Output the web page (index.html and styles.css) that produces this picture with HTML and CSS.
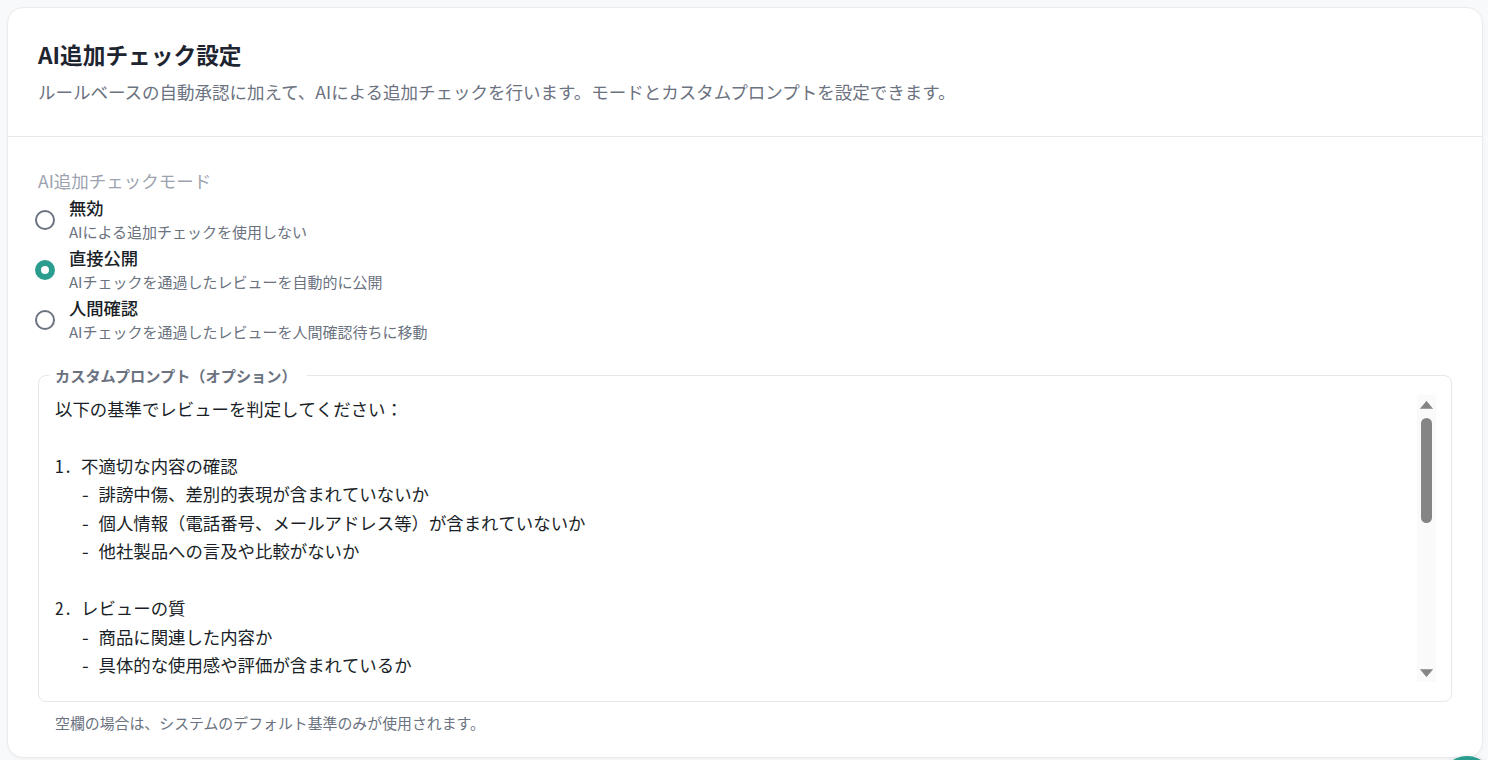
FILE: index.html
```html
<!DOCTYPE html>
<html lang="ja">
<head>
<meta charset="utf-8">
<title>AI追加チェック設定</title>
<link rel="stylesheet" href="styles.css">
</head>
<body>
<section class="card">
  <header class="card-header">
    <h2 class="title">AI追加チェック設定</h2>
    <p class="subtitle">ルールベースの自動承認に加えて、AIによる追加チェックを行います。モードとカスタムプロンプトを設定できます。</p>
  </header>
  <div class="card-body">
    <div class="mode-label">AI追加チェックモード</div>
    <div class="radio-group" role="radiogroup">
      <label class="option">
        <span class="radio"></span>
        <span class="option-text">
          <span class="option-title">無効</span>
          <span class="option-desc">AIによる追加チェックを使用しない</span>
        </span>
      </label>
      <label class="option">
        <span class="radio checked"></span>
        <span class="option-text">
          <span class="option-title">直接公開</span>
          <span class="option-desc">AIチェックを通過したレビューを自動的に公開</span>
        </span>
      </label>
      <label class="option">
        <span class="radio"></span>
        <span class="option-text">
          <span class="option-title">人間確認</span>
          <span class="option-desc">AIチェックを通過したレビューを人間確認待ちに移動</span>
        </span>
      </label>
    </div>
    <fieldset class="prompt-field">
      <legend class="prompt-legend">カスタムプロンプト（オプション）</legend>
      <div class="prompt-wrap">
        <textarea class="prompt" spellcheck="false">以下の基準でレビューを判定してください：

1. 不適切な内容の確認
   - 誹謗中傷、差別的表現が含まれていないか
   - 個人情報（電話番号、メールアドレス等）が含まれていないか
   - 他社製品への言及や比較がないか

2. レビューの質
   - 商品に関連した内容か
   - 具体的な使用感や評価が含まれているか
   - 極端に短い、または意味をなさない内容でないか

3. スパム・宣伝の検出
   - URLや外部サイトへの誘導が含まれていないか
   - 同一内容の繰り返し投稿でないか
   - 明らかな宣伝目的の投稿でないか

4. 信頼性
   - 実際に商品を使用したと思われる内容か
   - 過度に誇張された表現がないか

問題がある場合は、その理由を簡潔に説明してください。</textarea>
        <div class="scrollbar" aria-hidden="true">
          <span class="sb-btn"><svg width="13" height="8" viewBox="0 0 13 8"><path d="M6.5 0.3 L12.6 7.6 L0.4 7.6 Z" fill="#858585" stroke="#858585" stroke-width="0.6" stroke-linejoin="round"/></svg></span>
          <span class="sb-track"><span class="sb-thumb"></span></span>
          <span class="sb-btn"><svg width="13" height="8" viewBox="0 0 13 8"><path d="M0.4 0.4 L12.6 0.4 L6.5 7.7 Z" fill="#858585" stroke="#858585" stroke-width="0.6" stroke-linejoin="round"/></svg></span>
        </div>
      </div>
    </fieldset>
    <p class="helper">空欄の場合は、システムのデフォルト基準のみが使用されます。</p>
  </div>
</section>
<button class="fab" type="button" aria-label="保存"></button>
</body>
</html>
```

FILE: styles.css
```css
html, body {
  margin: 0;
  height: 100%;
  overflow: hidden;
}

body {
  background: #f8f9fa;
  padding: 7px 5px 0 7px;
  box-sizing: border-box;
  font-family: "Noto Sans CJK JP", "Noto Sans", sans-serif;
  color: #1f2937;
}

.card {
  background: #ffffff;
  border: 1px solid #ebebeb;
  border-radius: 16px;
  box-shadow: 0 1px 3px rgba(0, 0, 0, 0.04);
}

.card-header {
  padding: 31px 30px 31px;
  border-bottom: 1px solid #e7e8ea;
}

.title {
  margin: 0;
  font-size: 22.7px;
  line-height: 32px;
  font-weight: 700;
  color: #1e2530;
}

.subtitle {
  margin: 8px 0 0;
  font-size: 17.5px;
  line-height: 26px;
  color: #6b7280;
}

.card-body {
  padding: 32px 30px 24px;
}

.mode-label {
  font-size: 17.5px;
  line-height: 24px;
  color: #9ca3af;
}

.radio-group {
  margin-top: 3px;
  display: flex;
  flex-direction: column;
  gap: 2px;
}

.option {
  display: flex;
  align-items: center;
  gap: 14px;
}

.radio {
  width: 20px;
  height: 20px;
  box-sizing: border-box;
  border: 2px solid #6b7280;
  border-radius: 50%;
  margin-left: -3px;
  flex: none;
  background: #fff;
}

.radio.checked {
  border: 6px solid #2a9d8f;
}

.option-text {
  display: flex;
  flex-direction: column;
}

.option-title {
  font-size: 17.3px;
  line-height: 24px;
  font-weight: 500;
  color: #1a1f28;
}

.option-desc {
  font-size: 15px;
  line-height: 24px;
  color: #6b7280;
}

.prompt-field {
  margin: 21px 0 0;
  padding: 10px 15px 19px 16px;
  border: 1px solid #e5e7eb;
  border-radius: 8px;
  min-width: 0;
}

.prompt-legend {
  margin-left: -6px;
  padding: 0 10px 0 6px;
  font-size: 15.2px;
  line-height: 20px;
  font-weight: 700;
  color: #6b7280;
}

.prompt-wrap {
  display: flex;
  height: 287px;
}

.prompt {
  flex: 1;
  display: block;
  min-width: 0;
  height: 100%;
  box-sizing: border-box;
  margin: 0;
  padding: 0;
  border: none;
  outline: none;
  resize: none;
  background: transparent;
  font-family: "Noto Sans Mono CJK JP", "Noto Sans CJK JP", monospace;
  font-size: 17.4px;
  line-height: 28.44px;
  color: #1a1f28;
  overflow: hidden;
  white-space: pre-wrap;
}

.scrollbar {
  width: 19px;
  flex: none;
  display: flex;
  flex-direction: column;
  background: #fafafa;
}

.sb-btn {
  height: 19px;
  display: flex;
  align-items: center;
  justify-content: center;
  flex: none;
}

.sb-track {
  flex: 1;
  display: flex;
  justify-content: center;
  align-items: flex-start;
  padding-top: 4px;
}

.sb-thumb {
  width: 11px;
  height: 105px;
  border-radius: 6px;
  background: #858585;
}

.helper {
  margin: 11px 0 0 17px;
  font-size: 14.9px;
  line-height: 20px;
  color: #6b7280;
}

.fab {
  position: fixed;
  right: -7px;
  bottom: -52px;
  width: 56px;
  height: 56px;
  border: none;
  border-radius: 50%;
  background: #2a9d8f;
  box-shadow: 0 2px 6px rgba(0, 0, 0, 0.2);
  padding: 0;
}
```
